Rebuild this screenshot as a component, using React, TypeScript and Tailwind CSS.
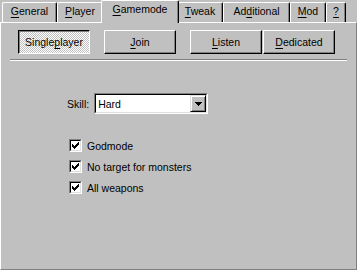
import React from "react";

const FONT = { fontFamily: '"Liberation Sans", Arial, sans-serif' };

function Label({ text, u }: { text: string; u: number }) {
  if (u < 0) return <>{text}</>;
  return (
    <>
      {text.slice(0, u)}
      <span className="underline underline-offset-[2px] decoration-[1px]">{text[u]}</span>
      {text.slice(u + 1)}
    </>
  );
}

function Tab({ text, u, w, active }: { text: string; u: number; w: number; active?: boolean }) {
  if (active) {
    return (
      <div
        className="relative z-10 -mx-[2px] -mb-[1px] flex h-[23px] shrink-0 justify-center rounded-t-[2px] border-l border-t border-r border-l-white border-t-white border-r-black bg-[#c0c0c0] pt-[2px] shadow-[inset_-1px_0_#808080]"
        style={{ width: w + 4 }}
      >
        <span className="leading-[12px]">
          <Label text={text} u={u} />
        </span>
      </div>
    );
  }
  return (
    <div
      className="flex h-[20px] shrink-0 justify-center rounded-t-[2px] border-l border-t border-r border-l-white border-t-white border-r-black pt-[2px] shadow-[inset_-1px_0_#808080]"
      style={{ width: w }}
    >
      <span className="leading-[12px]">
        <Label text={text} u={u} />
      </span>
    </div>
  );
}

function TButton({ text, u, pressed, className }: { text: string; u: number; pressed?: boolean; className?: string }) {
  const cls = pressed
    ? "border-t-black border-l-black border-b-white border-r-white shadow-[inset_1px_1px_#808080] bg-[repeating-conic-gradient(#ffffff_0_25%,#c0c0c0_0_50%)] bg-[length:2px_2px]"
    : "border-t-white border-l-white border-b-black border-r-black shadow-[inset_-1px_-1px_#808080]";
  return (
    <div className={`flex h-[24px] w-[72px] items-center justify-center border ${cls} ${className ?? ""}`}>
      <span className="leading-[12px]">
        <Label text={text} u={u} />
      </span>
    </div>
  );
}

function CheckMark() {
  const px: [number, number][] = [];
  const cols: [number, number][] = [
    [3, 5],
    [4, 6],
    [5, 7],
    [6, 6],
    [7, 5],
    [8, 4],
    [9, 3],
  ];
  cols.forEach(([x, y]) => {
    for (let i = 0; i < 3; i++) px.push([x, y + i]);
  });
  return (
    <svg width="13" height="13" viewBox="0 0 13 13" className="absolute left-0 top-0" shapeRendering="crispEdges">
      {px.map(([x, y], i) => (
        <rect key={i} x={x} y={y} width="1" height="1" fill="#000" />
      ))}
    </svg>
  );
}

function Check({ text }: { text: string }) {
  return (
    <div className="flex h-[13px] items-center">
      <div className="relative h-[13px] w-[13px] shrink-0 border border-t-[#808080] border-l-[#808080] border-b-white border-r-white">
        <div className="h-full w-full border border-t-black border-l-black border-b-[#dfdfdf] border-r-[#dfdfdf] bg-white" />
        <div className="absolute -left-[1px] -top-[1px]">
          <CheckMark />
        </div>
      </div>
      <span className="ml-[5px] leading-[12px]">{text}</span>
    </div>
  );
}

export default function App() {
  return (
    <div className="h-[270px] w-[357px] bg-[#c0c0c0] text-[10.5px] text-black" style={FONT}>
      <div className="flex h-[22px] items-end pl-[2px]">
        <Tab text="General" u={0} w={55} />
        <Tab text="Player" u={0} w={46} />
        <Tab text="Gamemode" u={0} w={74} active />
        <Tab text="Tweak" u={0} w={46} />
        <Tab text="Additional" u={2} w={67} />
        <Tab text="Mod" u={0} w={36} />
        <Tab text="?" u={0} w={20} />
      </div>
      <div className="h-[248px] w-[357px] border border-t-white border-l-white border-r-[#808080] border-b-[#808080]">
        <div className="flex pl-[17px] pt-[7px]">
          <TButton text="Singleplayer" u={6} pressed />
          <TButton text="Join" u={0} className="ml-[14px]" />
          <TButton text="Listen" u={0} className="ml-[14px]" />
          <TButton text="Dedicated" u={0} className="ml-[1px]" />
        </div>
        <div className="ml-[9px] mt-[5px] h-[2px] w-[337px] border-t border-b border-t-[#808080] border-b-white" />
        <div className="ml-[66px] mt-[32px] flex items-center">
          <span className="leading-[12px]">Skill:</span>
          <div className="ml-[5px] h-[21px] w-[114px] border border-t-[#808080] border-l-[#808080] border-b-white border-r-white">
            <div className="flex h-full w-full items-center border border-t-black border-l-black border-b-[#dfdfdf] border-r-[#dfdfdf] bg-white">
              <span className="ml-[2px] flex-1 leading-[12px]">Hard</span>
              <div className="flex h-[17px] w-[16px] items-center justify-center border border-t-[#dfdfdf] border-l-[#dfdfdf] border-b-black border-r-black bg-[#c0c0c0] shadow-[inset_1px_1px_#ffffff,inset_-1px_-1px_#808080]">
                <svg width="7" height="4" viewBox="0 0 7 4" shapeRendering="crispEdges">
                  <rect x="0" y="0" width="7" height="1" fill="#000" />
                  <rect x="1" y="1" width="5" height="1" fill="#000" />
                  <rect x="2" y="2" width="3" height="1" fill="#000" />
                  <rect x="3" y="3" width="1" height="1" fill="#000" />
                </svg>
              </div>
            </div>
          </div>
        </div>
        <div className="ml-[68px] mt-[25px] flex flex-col gap-[8px]">
          <Check text="Godmode" />
          <Check text="No target for monsters" />
          <Check text="All weapons" />
        </div>
      </div>
    </div>
  );
}
